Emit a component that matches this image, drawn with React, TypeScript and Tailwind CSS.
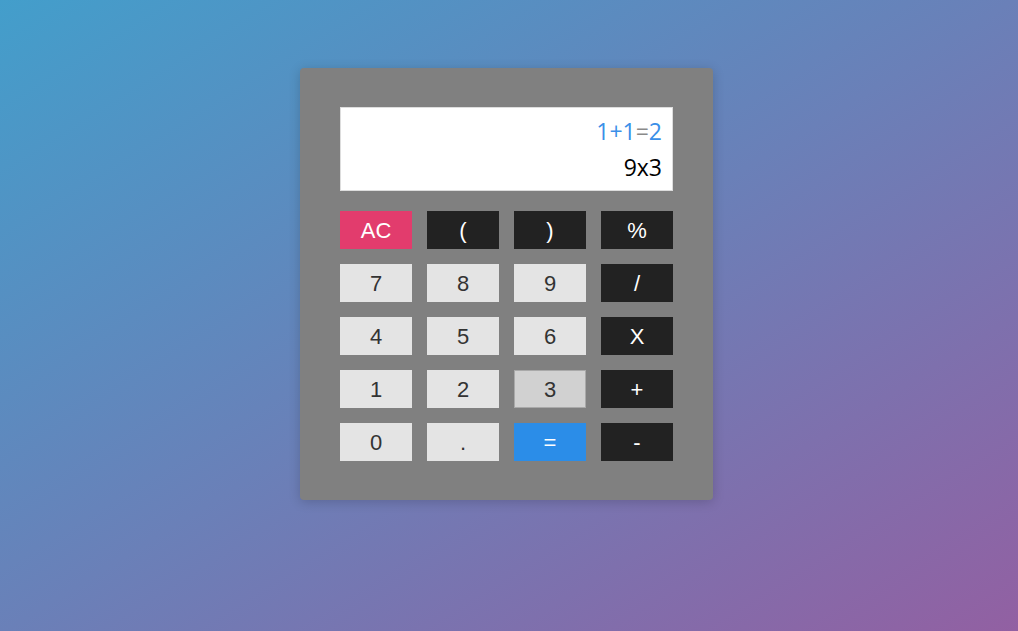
import React from "react";

type Btn = { label: string; kind: "ac" | "dark" | "light" | "active" | "eq" };

const rows: Btn[][] = [
  [
    { label: "AC", kind: "ac" },
    { label: "(", kind: "dark" },
    { label: ")", kind: "dark" },
    { label: "%", kind: "dark" },
  ],
  [
    { label: "7", kind: "light" },
    { label: "8", kind: "light" },
    { label: "9", kind: "light" },
    { label: "/", kind: "dark" },
  ],
  [
    { label: "4", kind: "light" },
    { label: "5", kind: "light" },
    { label: "6", kind: "light" },
    { label: "X", kind: "dark" },
  ],
  [
    { label: "1", kind: "light" },
    { label: "2", kind: "light" },
    { label: "3", kind: "active" },
    { label: "+", kind: "dark" },
  ],
  [
    { label: "0", kind: "light" },
    { label: ".", kind: "light" },
    { label: "=", kind: "eq" },
    { label: "-", kind: "dark" },
  ],
];

function cls(kind: Btn["kind"]) {
  switch (kind) {
    case "ac":
      return "bg-[#e23c6d] text-white";
    case "dark":
      return "bg-[#222222] text-white";
    case "light":
      return "bg-[#e4e4e4] text-[#333333]";
    case "active":
      return "bg-[#d1d1d1] text-[#333333] border border-[#a9a9a9]";
    case "eq":
      return "bg-[#2b8de8] text-white";
  }
}

export default function App() {
  return (
    <div className="w-[1018px] h-[631px] overflow-hidden bg-[linear-gradient(148deg,#439ecb_0%,#6a80b8_50%,#9260a2_100%)] pt-[68px]">
      <div className="ml-[300px] w-[413px] h-[432px] bg-[#808080] rounded-[4px] shadow-[0_2px_12px_rgba(0,0,0,0.18)] pt-[39px] px-[40px]">
        <div className="w-[333px] h-[84px] bg-white border border-[#dddddd] flex flex-col justify-center items-end pr-[10px] font-['Open_Sans','Noto_Sans',sans-serif] text-[23px] leading-[36px]">
          <div className="text-[#3a8fe8]">
            1+1<span className="text-[#8a8a8a]">=</span>2
          </div>
          <div className="text-black">9x3</div>
        </div>
        <div className="mt-[20px] flex flex-col gap-[15px]">
          {rows.map((r, i) => (
            <div key={i} className="flex gap-[15px]">
              {r.map((b) => (
                <div
                  key={b.label}
                  className={`w-[72px] h-[38px] flex items-center justify-center font-['Liberation_Sans',Arial,sans-serif] text-[22px] ${cls(b.kind)}`}
                >
                  {b.label}
                </div>
              ))}
            </div>
          ))}
        </div>
      </div>
    </div>
  );
}
